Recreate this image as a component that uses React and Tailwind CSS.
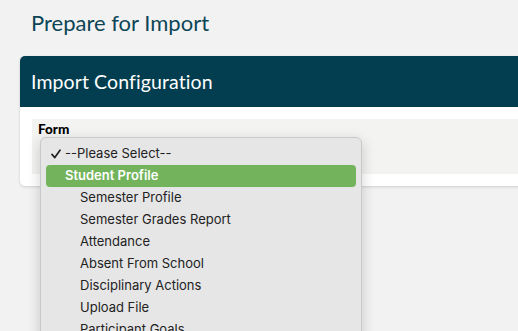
import React from 'react';

const items = [
  'Semester Profile',
  'Semester Grades Report',
  'Attendance',
  'Absent From School',
  'Disciplinary Actions',
  'Upload File',
  'Participant Goals',
];

export default function App() {
  return (
    <div
      className="relative h-[331px] w-full overflow-hidden bg-[#f2f2f2]"
      style={{ fontFamily: 'Lato, "Noto Sans", sans-serif' }}
    >
      {/* Page title */}
      <h1 className="pl-[31px] pt-[9px] text-[22px] leading-[28px] text-[#0c4656]">
        Prepare for Import
      </h1>

      {/* Card */}
      <div className="ml-[20px] mt-[19px] w-[520px] rounded-[5px] bg-white shadow-[0_1px_3px_rgba(0,0,0,0.15)]">
        <div className="flex h-[51px] items-center rounded-t-[5px] bg-[#023e4f] px-[11px]">
          <h2 className="text-[19.5px] tracking-[0.1px] text-white">Import Configuration</h2>
        </div>
        <div className="py-[12px] pl-[12px]">
          <div className="h-[55px] bg-[#f3f3f2] px-[6px] pt-[2px]">
            <span className="block text-[13.5px] leading-[16px] font-black text-black">Form</span>
          </div>
        </div>
      </div>

      {/* Open select menu */}
      <div
        className="absolute left-[40px] top-[137px] w-[322px] h-[220px] rounded-[6px] border border-[#c9c9c9] bg-[#e6e6e6] px-[5px] pt-[5px] shadow-[0_4px_14px_rgba(0,0,0,0.18)]"
        style={{ fontFamily: 'Inter, "Noto Sans", sans-serif' }}
      >
        <div className="flex h-[22px] items-center text-[13px] text-[#222]">
          <span className="flex w-[19px] pl-[5px]">
            <svg width="10" height="10" viewBox="0 0 10 10" fill="none" stroke="#222" strokeWidth="1.7" strokeLinecap="round" strokeLinejoin="round">
              <path d="M1 5.4 L3.8 8.6 L9 1.2" />
            </svg>
          </span>
          <span>--Please Select--</span>
        </div>
        <div className="flex h-[22px] items-center rounded-[4px] bg-[#72b35b] pl-[19px] text-[13px] font-semibold text-white">
          Student Profile
        </div>
        {items.map((item) => (
          <div key={item} className="flex h-[22px] items-center pl-[34px] text-[13px] text-[#222]">
            {item}
          </div>
        ))}
      </div>
    </div>
  );
}
